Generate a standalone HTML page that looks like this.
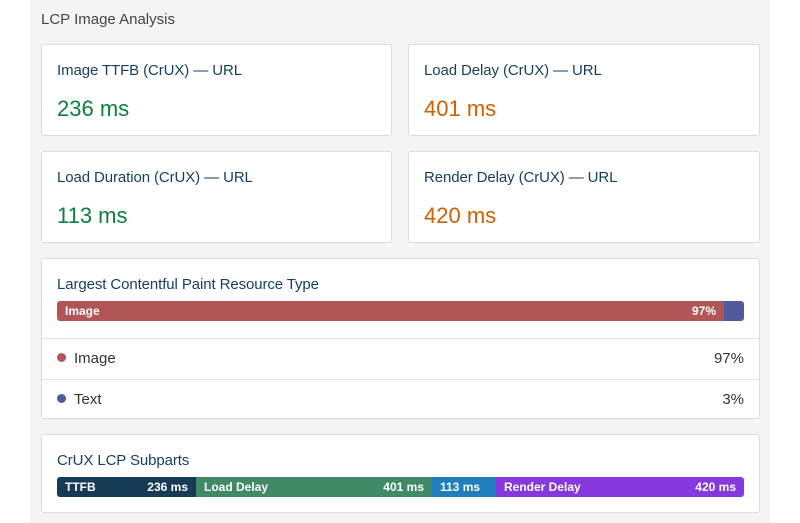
<!DOCTYPE html>
<html><head><style>
*{margin:0;padding:0;box-sizing:border-box}
body{width:800px;height:523px;background:#fff;font-family:"Liberation Sans",sans-serif;position:relative;overflow:hidden}
.bg{position:absolute;left:30px;top:0;width:740px;height:523px;background:#f4f4f4}
.card{position:absolute;background:#fff;border:1px solid #dcdcdc;border-radius:3px}
.t{position:absolute;color:#163f5c;font-size:15px;letter-spacing:-0.1px}
.v{position:absolute;font-size:22px}
.g{color:#0d7f3e}.o{color:#cc6002}
.bar{position:absolute;height:20px;color:#fff;font-size:12px;font-weight:bold;line-height:20px}
.seg{position:absolute;top:0;height:20px;padding:0 8px;display:flex;justify-content:space-between}
.row{position:absolute;left:0;right:0;height:1px;background:#e6e6e6}
.li{position:absolute;font-size:15px;color:#333}
.dot{display:inline-block;width:9px;height:9px;border-radius:50%;margin-right:8px;vertical-align:1px}
</style></head><body>
<div class="bg"></div>
<div style="position:absolute;left:41px;top:11px;font-size:15px;color:#444">LCP Image Analysis</div>

<div class="card" style="left:41px;top:44px;width:351px;height:92px"></div>
<div class="t" style="left:57px;top:62px">Image TTFB (CrUX) — URL</div>
<div class="v g" style="left:57px;top:96px">236 ms</div>
<div class="card" style="left:408px;top:44px;width:352px;height:92px"></div>
<div class="t" style="left:424px;top:62px">Load Delay (CrUX) — URL</div>
<div class="v o" style="left:424px;top:96px">401 ms</div>
<div class="card" style="left:41px;top:151px;width:351px;height:92px"></div>
<div class="t" style="left:57px;top:169px">Load Duration (CrUX) — URL</div>
<div class="v g" style="left:57px;top:203px">113 ms</div>
<div class="card" style="left:408px;top:151px;width:352px;height:92px"></div>
<div class="t" style="left:424px;top:169px">Render Delay (CrUX) — URL</div>
<div class="v o" style="left:424px;top:203px">420 ms</div>

<div class="card" style="left:41px;top:258px;width:719px;height:161px">
<div class="row" style="top:79px"></div><div class="row" style="top:120px"></div></div>
<div class="t" style="left:57px;top:276px">Largest Contentful Paint Resource Type</div>
<div class="bar" style="left:57px;top:301px;width:687px;border-radius:3px;overflow:hidden">
<div class="seg" style="left:0;width:667px;background:#b25556"><span>Image</span><span>97%</span></div>
<div class="seg" style="left:667px;width:20px;background:#5159a0"></div></div>
<div class="li" style="left:57px;top:350px"><span class="dot" style="background:#b25556"></span>Image</div>
<div class="li" style="right:56px;top:350px">97%</div>
<div class="li" style="left:57px;top:391px"><span class="dot" style="background:#5159a0"></span>Text</div>
<div class="li" style="right:56px;top:391px">3%</div>

<div class="card" style="left:41px;top:434px;width:719px;height:79px"></div>
<div class="t" style="left:57px;top:452px">CrUX LCP Subparts</div>
<div class="bar" style="left:57px;top:477px;width:687px;border-radius:3px;overflow:hidden">
<div class="seg" style="left:0;width:139px;background:#173b54"><span>TTFB</span><span>236 ms</span></div>
<div class="seg" style="left:139px;width:236px;background:#408a68"><span>Load Delay</span><span>401 ms</span></div>
<div class="seg" style="left:375px;width:64px;background:#1f7ebb"><span>113 ms</span></div>
<div class="seg" style="left:439px;width:248px;background:#8637dd"><span>Render Delay</span><span>420 ms</span></div></div>
</body></html>
